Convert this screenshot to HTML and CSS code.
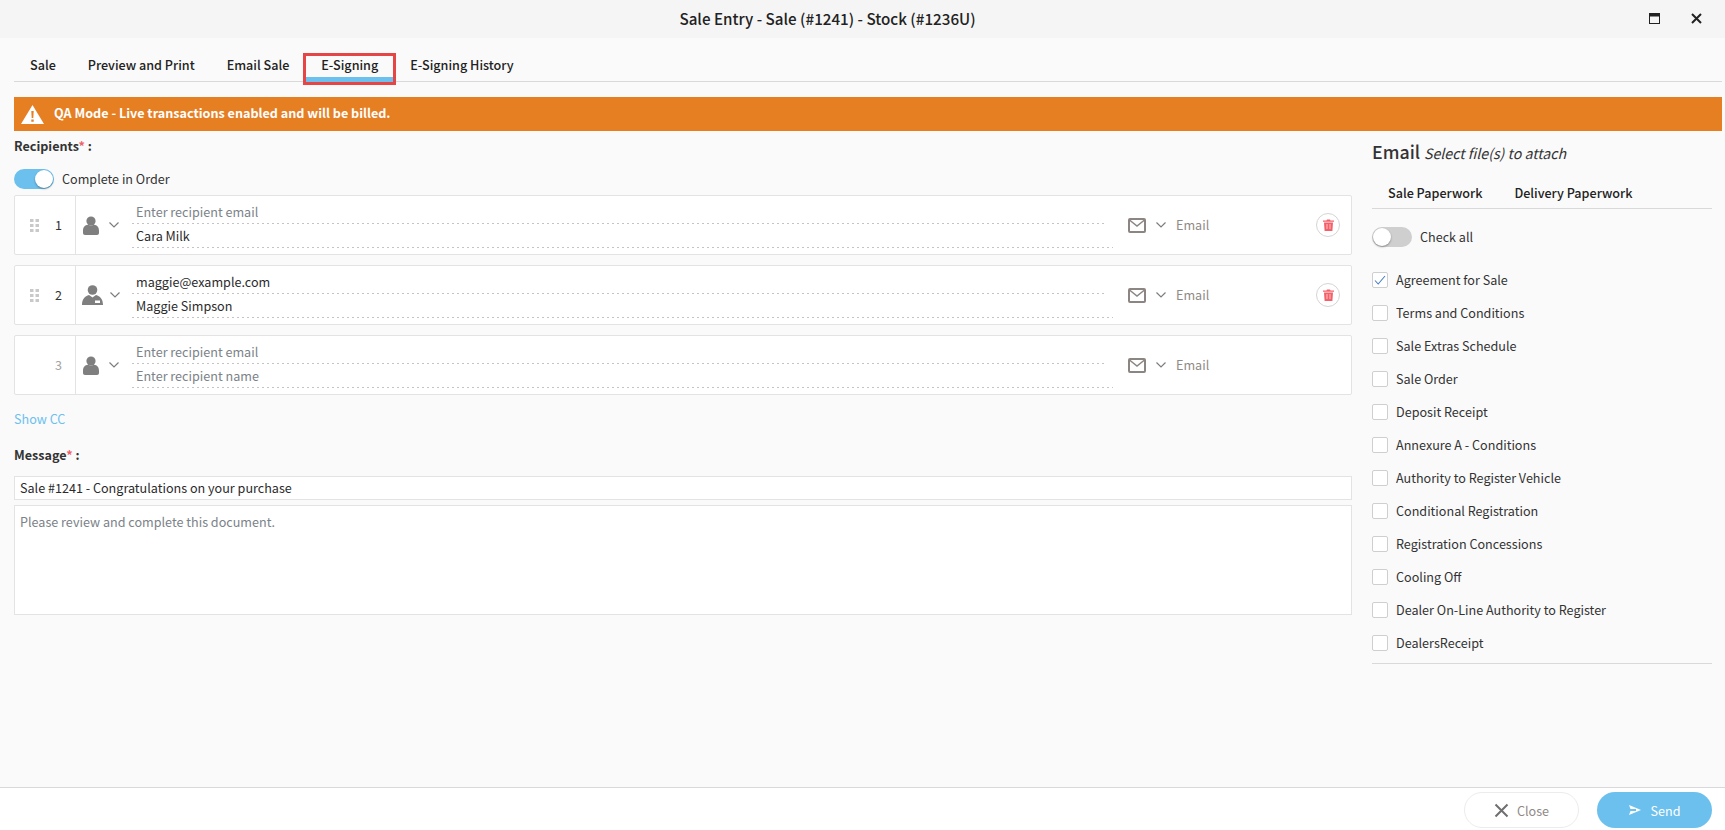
FILE: index.html
```html
<!DOCTYPE html>
<html lang="en">
<head>
    <meta charset="UTF-8">
    <title>Sale Entry - E-Signing</title>
    <link rel="stylesheet" href="styles.css">
</head>
<body>

<svg class="defs" width="0" height="0">
    <symbol id="ico-person" viewBox="0 0 16 19">
        <circle cx="8" cy="5" r="4.6"/>
        <path d="M0 15c0-4 2-6 5-6.2 1.800 1 4.200 1 6 0 3 .2 5 2.200 5 6.200v2c0 1.200-.8 2-2 2H2c-1.200 0-2-.8-2-2z"/>
    </symbol>
    <symbol id="ico-agent" viewBox="0 0 21 20">
        <circle cx="10.500" cy="5" r="4.800"/>
        <path d="M0 20c0-6 3-9 7-10l3.500 2.500L14 10c4 1 7 4 7 10z"/>
        <rect x="13" y="15.500" width="5" height="2.500" fill="#fff"/>
    </symbol>
    <symbol id="ico-chevron" viewBox="0 0 10 6">
        <path d="M.5.5 5 5 9.500.5" fill="none" stroke="#7d7d7d" stroke-width="1.200"/>
    </symbol>
    <symbol id="ico-mail" viewBox="0 0 18 15">
        <rect x="1" y="1" width="16" height="13" rx="1" fill="none" stroke="#8c8581" stroke-width="2"/>
        <path d="M1.500 2 9 8l7.500-6" fill="none" stroke="#8c8581" stroke-width="1.500"/>
    </symbol>
    <symbol id="ico-trash" viewBox="0 0 11 12">
        <path d="M0 1.500h3.500L4 .5h3l.5 1H11v1.200H0zM1 3.500h9l-.6 8.500H1.600z" fill="#f4606a"/>
        <path d="M4 5v5M7 5v5" stroke="#ffb3b3" stroke-width="1.200"/>
    </symbol>
    <symbol id="ico-grip" viewBox="0 0 9 13">
        <g fill="#c9c9c9">
            <rect width="3.500" height="3"/><rect x="5.500" width="3.500" height="3"/>
            <rect y="5" width="3.500" height="3"/><rect x="5.500" y="5" width="3.500" height="3"/>
            <rect y="10" width="3.500" height="3"/><rect x="5.500" y="10" width="3.500" height="3"/>
        </g>
    </symbol>
</svg>

<header class="titlebar">
    <div class="titlebar-text">Sale Entry - Sale (#1241) - Stock (#1236U)</div>
    <div class="titlebar-btns">
        <svg class="win-max" width="11" height="11" viewBox="0 0 11 11"><rect x=".5" y=".5" width="10" height="10" fill="none" stroke="#222"/><rect width="11" height="3.500" fill="#222"/></svg>
        <svg class="win-close" width="11" height="11" viewBox="0 0 11 11"><path d="M1 1l9 9M10 1l-9 9" stroke="#222" stroke-width="2"/></svg>
    </div>
</header>

<nav class="tabs">
    <div class="tab">Sale</div>
    <div class="tab">Preview and Print</div>
    <div class="tab">Email Sale</div>
    <div class="tab active">E-Signing</div>
    <div class="tab">E-Signing History</div>
</nav>

<div class="banner">
    <svg width="23" height="19" viewBox="0 0 23 19"><path d="M11.500 0 23 19H0z" fill="#fff"/><path d="M10.300 6h2.400l-.4 7h-1.600zM10.300 14.500h2.400v2.300h-2.400z" fill="#e67e22"/></svg>
    <span>QA Mode - Live transactions enabled and will be billed.</span>
</div>

<main class="content">
    <section class="left">
        <div class="label">Recipients<span class="req">*</span> :</div>
        <div class="order-toggle">
            <span class="toggle on"></span>
            <span>Complete in Order</span>
        </div>

        <div class="recipient">
            <div class="rec-num">
                <svg class="grip" width="9" height="13"><use href="#ico-grip"/></svg>
                <span>1</span>
            </div>
            <div class="rec-type">
                <svg class="person" width="16" height="19"><use href="#ico-person"/></svg>
                <svg class="chev" width="10" height="6"><use href="#ico-chevron"/></svg>
            </div>
            <div class="rec-fields">
                <div class="field short placeholder">Enter recipient email</div>
                <div class="field">Cara Milk</div>
            </div>
            <div class="rec-method">
                <svg width="18" height="15"><use href="#ico-mail"/></svg>
                <svg class="chev" width="10" height="6"><use href="#ico-chevron"/></svg>
                <span>Email</span>
            </div>
            <div class="rec-del"><span class="del-btn"><svg width="11" height="12"><use href="#ico-trash"/></svg></span></div>
        </div>

        <div class="recipient">
            <div class="rec-num">
                <svg class="grip" width="9" height="13"><use href="#ico-grip"/></svg>
                <span>2</span>
            </div>
            <div class="rec-type">
                <svg class="person agent" width="21" height="20"><use href="#ico-agent"/></svg>
                <svg class="chev" width="10" height="6"><use href="#ico-chevron"/></svg>
            </div>
            <div class="rec-fields">
                <div class="field short">maggie@example.com</div>
                <div class="field">Maggie Simpson</div>
            </div>
            <div class="rec-method">
                <svg width="18" height="15"><use href="#ico-mail"/></svg>
                <svg class="chev" width="10" height="6"><use href="#ico-chevron"/></svg>
                <span>Email</span>
            </div>
            <div class="rec-del"><span class="del-btn"><svg width="11" height="12"><use href="#ico-trash"/></svg></span></div>
        </div>

        <div class="recipient">
            <div class="rec-num muted">
                <span>3</span>
            </div>
            <div class="rec-type">
                <svg class="person" width="16" height="19"><use href="#ico-person"/></svg>
                <svg class="chev" width="10" height="6"><use href="#ico-chevron"/></svg>
            </div>
            <div class="rec-fields">
                <div class="field short placeholder">Enter recipient email</div>
                <div class="field placeholder">Enter recipient name</div>
            </div>
            <div class="rec-method">
                <svg width="18" height="15"><use href="#ico-mail"/></svg>
                <svg class="chev" width="10" height="6"><use href="#ico-chevron"/></svg>
                <span>Email</span>
            </div>
            <div class="rec-del"></div>
        </div>

        <div class="show-cc">Show CC</div>

        <div class="label">Message<span class="req">*</span> :</div>
        <div class="subject">Sale #1241 - Congratulations on your purchase</div>
        <div class="message">Please review and complete this document.</div>
    </section>

    <aside class="right">
        <div class="right-head"><b>Email</b> <i>Select file(s) to attach</i></div>
        <div class="sub-tabs">
            <div>Sale Paperwork</div>
            <div>Delivery Paperwork</div>
        </div>
        <div class="check-all">
            <span class="toggle"></span>
            <span>Check all</span>
        </div>
        <ul class="files">
            <li><span class="box"><svg width="12" height="10" viewBox="0 0 12 10"><path d="M1 5.500 4.200 9 11 1" fill="none" stroke="#4a7fc4" stroke-width="1.100"/></svg></span>Agreement for Sale</li>
            <li><span class="box"></span>Terms and Conditions</li>
            <li><span class="box"></span>Sale Extras Schedule</li>
            <li><span class="box"></span>Sale Order</li>
            <li><span class="box"></span>Deposit Receipt</li>
            <li><span class="box"></span>Annexure A - Conditions</li>
            <li><span class="box"></span>Authority to Register Vehicle</li>
            <li><span class="box"></span>Conditional Registration</li>
            <li><span class="box"></span>Registration Concessions</li>
            <li><span class="box"></span>Cooling Off</li>
            <li><span class="box"></span>Dealer On-Line Authority to Register</li>
            <li><span class="box"></span>DealersReceipt</li>
        </ul>
    </aside>
</main>

<footer class="footer">
    <button class="btn btn-close">
        <svg width="15" height="15" viewBox="0 0 15 15"><path d="M1.500 1.500l12 12M13.500 1.500l-12 12" stroke="#6f6f6f" stroke-width="2"/></svg>
        Close
    </button>
    <button class="btn btn-send">
        <svg width="12" height="10" viewBox="0 0 12 10"><path d="M0 0l12 5-12 5 1.500-4H7V4H1.500z" fill="#fff"/></svg>
        Send
    </button>
</footer>

</body>
</html>
```

FILE: styles.css
```css
* {
    box-sizing: border-box;
}

html, body {
    height: 100%;
}

body {
    margin: 0;
    display: flex;
    flex-direction: column;
    background-color: #fafafa;
    color: #333;
    font-family: "Noto Sans CJK SC", "Noto Sans", sans-serif;
    font-size: 12.6px;
    line-height: 20px;
    overflow: hidden;
}

.defs {
    position: absolute;
}

.titlebar {
    display: flex;
    align-items: center;
    height: 38px;
    padding-bottom: 2px;
    flex-shrink: 0;
    background-color: #f5f5f5;
}

.titlebar-text {
    flex: 1;
    text-align: center;
    font-size: 15.2px;
    font-weight: 500;
    color: #222;
}

.titlebar-btns {
    width: 70px;
    display: flex;
    align-items: center;
}

.win-max {
    margin-left: -6px;
}

.win-close {
    margin-left: 31px;
}

.tabs {
    display: flex;
    height: 44px;
    margin: 0 3px 0 14px;
    flex-shrink: 0;
    border-bottom: 1px solid #d9d9d9;
}

.tab {
    padding: 17px 16px 0;
    font-weight: 500;
    color: #222;
    white-space: nowrap;
}

.tab.active {
    outline: 3px solid #e64545;
    outline-offset: -3px;
    margin: 15px -2px -4px -2px;
    height: 32px;
    padding: 2px 18px 0;
    border-bottom: 8px solid #6cc0ee;
}

.banner {
    display: flex;
    align-items: center;
    gap: 10px;
    height: 34px;
    margin: 15px 3px 0 14px;
    padding-left: 7px;
    flex-shrink: 0;
    background-color: #e67e22;
    color: #fff;
    font-weight: 700;
}

.banner span {
    margin-top: -2px;
}

.content {
    flex: 1;
    display: flex;
    gap: 20px;
    padding: 0 13px 0 14px;
}

.left {
    width: 1338px;
    padding-top: 5px;
}

.label {
    font-weight: 700;
    color: #333;
}

.req {
    color: #f0626a;
}

.order-toggle, .check-all {
    display: flex;
    align-items: center;
    gap: 8px;
}

.order-toggle {
    margin: 13px 0 6px;
}

.toggle {
    position: relative;
    display: block;
    width: 40px;
    height: 20px;
    border-radius: 10px;
    background-color: #cfcfcf;
}

.toggle::after {
    content: "";
    position: absolute;
    top: 1px;
    left: 1px;
    width: 18px;
    height: 18px;
    border-radius: 50%;
    background-color: #fff;
    box-shadow: 0 1px 2px rgba(0, 0, 0, 0.35);
}

.toggle.on {
    background-color: #6cc0ee;
}

.toggle.on::after {
    left: 21px;
}

.recipient {
    display: flex;
    align-items: center;
    height: 60px;
    margin-bottom: 10px;
    background-color: #fff;
    border: 1px solid #e3e3e3;
    border-radius: 2px;
}

.rec-num {
    display: flex;
    align-items: center;
    justify-content: flex-end;
    gap: 16px;
    width: 61px;
    height: 100%;
    padding-right: 13px;
    border-right: 1px solid #e3e3e3;
    color: #333;
}

.rec-num.muted {
    color: #a5a5a5;
}

.rec-type {
    display: flex;
    align-items: center;
    width: 56px;
    padding-left: 7px;
}

.person {
    fill: #7f7f7f;
    flex-shrink: 0;
}

.person + .chev {
    margin-left: 10px;
}

.person.agent {
    margin-left: -1px;
}

.person.agent + .chev {
    margin-left: 7px;
}

.rec-fields {
    width: 981px;
    flex-shrink: 0;
}

.field {
    height: 24px;
    line-height: 24px;
    margin-top: -2px;
    padding-left: 4px;
    background: linear-gradient(to right, #c4c4c4 50%, transparent 50%) left bottom / 5px 1px repeat-x;
    color: #2b2b2b;
}

.field + .field {
    margin-top: 0;
}

.field.short {
    margin-right: 8px;
}

.field.placeholder {
    color: #7b8288;
}

.rec-method {
    display: flex;
    align-items: center;
    gap: 10px;
    width: 204px;
    padding-left: 15px;
    color: #8f8a86;
}

.del-btn {
    display: flex;
    align-items: center;
    justify-content: center;
    width: 24px;
    height: 24px;
    margin-left: -1px;
    border: 1px solid #d5d5d5;
    border-radius: 50%;
}

.show-cc {
    margin: 14px 0 16px;
    color: #6cc0ee;
}

.subject {
    height: 24px;
    margin-top: 11px;
    padding-left: 5px;
    line-height: 22px;
    background-color: #fff;
    border: 1px solid #e3e3e3;
    color: #2b2b2b;
}

.message {
    height: 110px;
    margin-top: 5px;
    padding: 6px 5px;
    background-color: #fff;
    border: 1px solid #e3e3e3;
    color: #7b8288;
}

.right {
    width: 340px;
}

.right-head {
    margin-top: 7px;
    height: 26px;
    line-height: 26px;
}

.right-head b {
    font-size: 17.8px;
    font-weight: 500;
    color: #333;
}

.right-head i {
    font-size: 14.2px;
    margin-left: 1px;
}

.sub-tabs {
    display: flex;
    gap: 32px;
    height: 45px;
    padding: 19px 0 0 16px;
    border-bottom: 1px solid #d9d9d9;
    font-weight: 500;
    color: #222;
}

.check-all {
    margin-top: 18px;
}

.files {
    list-style: none;
    margin: 16px 0 0;
    padding: 0 0 4px;
    border-bottom: 1px solid #d9d9d9;
}

.files li {
    display: flex;
    align-items: center;
    gap: 8px;
    height: 33px;
}

.box {
    display: flex;
    align-items: center;
    justify-content: center;
    width: 16px;
    height: 16px;
    background-color: #fff;
    border: 1px solid #cfcfcf;
    border-radius: 2px;
}

.footer {
    display: flex;
    justify-content: flex-end;
    align-items: flex-start;
    gap: 18px;
    height: 43px;
    flex-shrink: 0;
    padding: 4px 13px 0 0;
    background-color: #fff;
    border-top: 1px solid #d9d9d9;
}

.btn {
    display: flex;
    align-items: center;
    justify-content: center;
    gap: 8px;
    width: 115px;
    height: 36px;
    border-radius: 18px;
    font-family: inherit;
    font-size: 12.6px;
}

.btn-close {
    background-color: #fff;
    border: 1px solid #ececec;
    color: #8f8a86;
}

.btn-send {
    gap: 10px;
    background-color: #6cc0ee;
    border: none;
    color: #fff;
}
```
